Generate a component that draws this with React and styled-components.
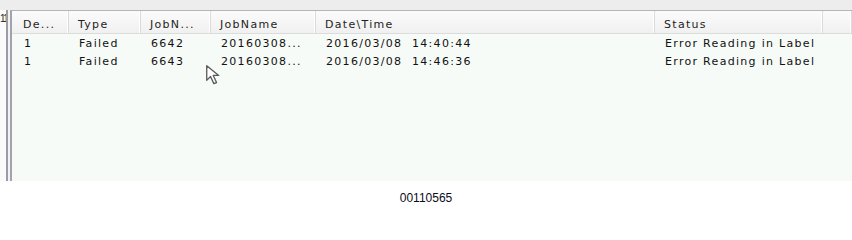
import React from "react";
import styled, { createGlobalStyle } from "styled-components";

const GlobalStyle = createGlobalStyle`
  html, body {
    margin: 0;
    padding: 0;
    background: #ffffff;
  }
  body {
    width: 852px;
    height: 215px;
    overflow: hidden;
  }
`;

const Page = styled.div`
  position: relative;
  width: 852px;
  height: 215px;
  display: flex;
  flex-direction: column;
  font-family: "DejaVu Sans", Verdana, sans-serif;
`;

const TopBand = styled.div`
  height: 10px;
  background: #ededed;
  flex-shrink: 0;
`;

const Main = styled.div`
  height: 171px;
  display: flex;
  flex-shrink: 0;
`;

const SidePanel = styled.div`
  width: 8px;
  border-right: 2px solid #9b9ba6;
  background: #fafafa;
  overflow: hidden;
  font-family: "Liberation Sans", Arial, sans-serif;
  font-size: 10px;
  letter-spacing: -1.6px;
  color: #222;
  padding-top: 3px;
  box-sizing: border-box;
`;

const Gap = styled.div`
  width: 2px;
  background: #f3f3f3;
`;

const ListView = styled.div`
  flex: 1;
  display: flex;
  flex-direction: column;
  border-left: 2px solid #a3a3ae;
  border-top: 1px solid #b4b4bc;
  background: #f7fbf8;
  min-width: 0;
`;

const cols = "57px 72px 70px 105px 339px 168px 1fr";

const HeaderRow = styled.div`
  display: grid;
  grid-template-columns: ${cols};
  height: 22px;
  background: linear-gradient(#fbfbfb, #f0f0f0);
  border-bottom: 1px solid #dcdcdc;
`;

const HeaderCell = styled.div`
  display: flex;
  align-items: center;
  padding: 4px 0 0 ${(p) => p.$pad || 9}px;
  border-right: 1px solid #dadada;
  box-shadow: inset -1px 0 0 #ffffff;
  font-size: 11px;
  letter-spacing: 1.3px;
  color: #1e1e1e;
  white-space: pre;
  overflow: hidden;
`;

const Body = styled.div`
  flex: 1;
  padding-top: 1px;
`;

const Row = styled.div`
  display: grid;
  grid-template-columns: ${cols};
  height: 17.5px;
  align-items: center;
`;

const Cell = styled.div`
  padding-left: ${(p) => p.$pad || 10}px;
  font-size: 11px;
  letter-spacing: 1.3px;
  color: #111111;
  white-space: pre;
  overflow: hidden;
`;

const Footer = styled.div`
  flex: 1;
  display: flex;
  justify-content: center;
  padding-top: 10px;
  font-family: "Liberation Sans", Arial, sans-serif;
  font-size: 12px;
  color: #0a0a20;
`;

const Cursor = styled.svg`
  position: absolute;
  left: 205px;
  top: 64px;
  opacity: 0.8;
`;

const headers = ["De...", "Type", "JobN...", "JobName", "Date\\Time", "Status", ""];

const rows = [
  ["1", "Failed", "6642", "20160308...", "2016/03/08  14:40:44", "Error Reading in Label"],
  ["1", "Failed", "6643", "20160308...", "2016/03/08  14:46:36", "Error Reading in Label"],
];

const App = () => {
  return (
    <Page>
      <GlobalStyle />
      <TopBand />
      <Main>
        <SidePanel>11</SidePanel>
        <Gap />
        <ListView>
          <HeaderRow>
            {headers.map((h, i) => (
              <HeaderCell key={i} $pad={i === 0 ? 11 : 9}>
                {h}
              </HeaderCell>
            ))}
          </HeaderRow>
          <Body>
            {rows.map((r, ri) => (
              <Row key={ri}>
                {r.map((c, ci) => (
                  <Cell key={ci} $pad={ci === 0 ? 12 : 10}>
                    {c}
                  </Cell>
                ))}
              </Row>
            ))}
          </Body>
        </ListView>
      </Main>
      <Footer>00110565</Footer>
      <Cursor width="22" height="24" viewBox="0 0 20 22">
        <path
          d="M1.5 1.5 L1.5 15 L5 11.5 L8 18 L10.5 17 L7.5 10.5 L12.5 10.5 Z"
          fill="#ffffff"
          stroke="#333"
          strokeWidth="1.2"
          strokeLinejoin="round"
        />
      </Cursor>
    </Page>
  );
};

export default App;
